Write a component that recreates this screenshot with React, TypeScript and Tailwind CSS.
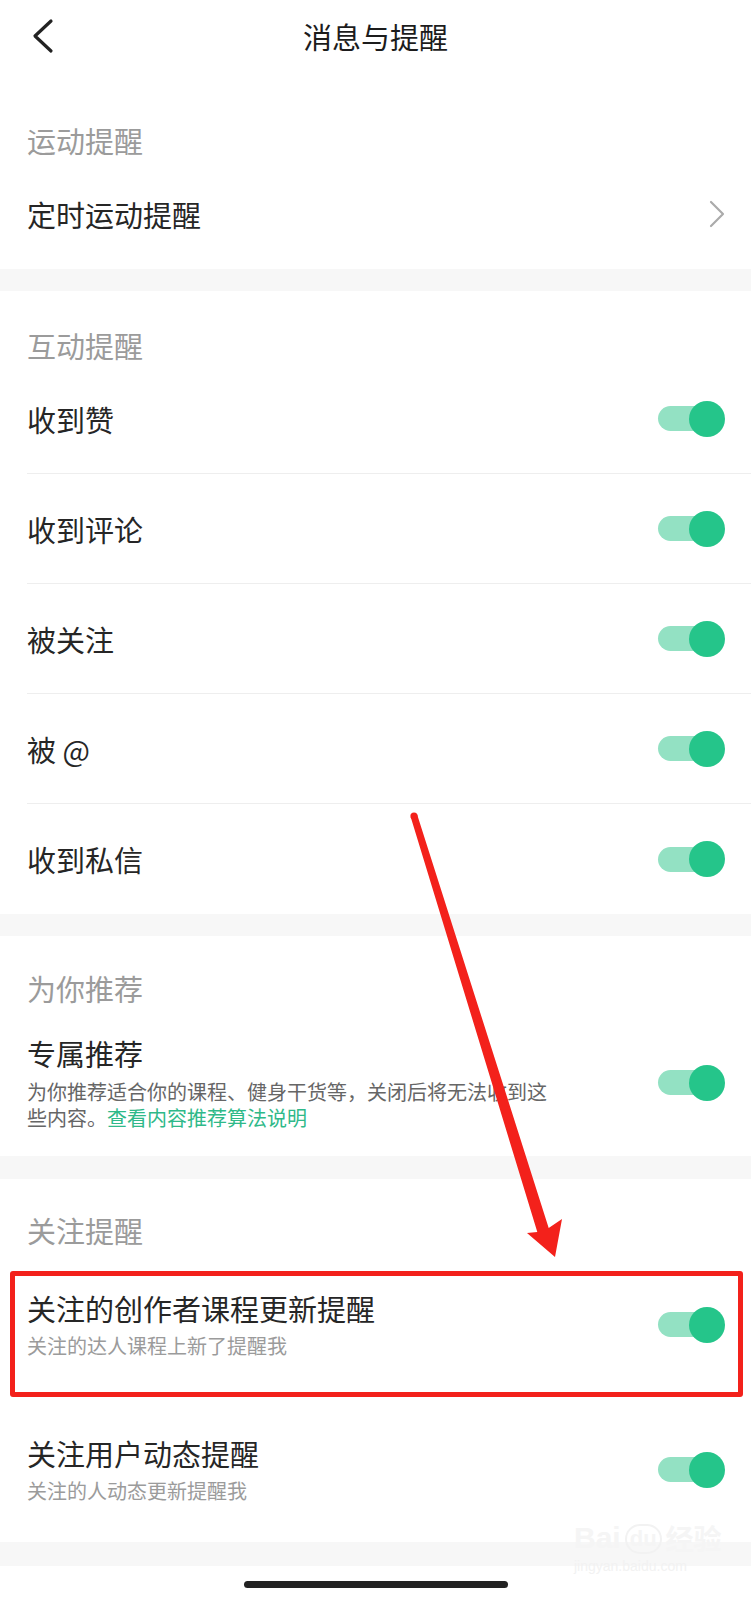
import React from "react";

const FONT = '"Noto Sans CJK SC", "Noto Sans", sans-serif';

function Toggle() {
  return (
    <div className="flex items-center">
      <div className="w-[50px] h-[25px] rounded-full bg-[#93e1c3]" />
      <div className="w-[36px] h-[36px] rounded-full bg-[#25c58a] -ml-[19px]" />
    </div>
  );
}

function Band({ h }: { h: string }) {
  return <div className={`bg-[#f7f7f7] ${h}`} />;
}

function Label({ text, pt }: { text: string; pt: string }) {
  return (
    <div className={`h-[73px] pl-[27px] ${pt}`}>
      <div className="text-[29px] leading-[28px] text-[#9b9b9b]">{text}</div>
    </div>
  );
}

function ToggleRow({ text, border }: { text: string; border?: boolean }) {
  return (
    <div className="pl-[27px]">
      <div
        className={`h-[110px] flex items-center justify-between pr-[26px] ${
          border ? "border-b border-[#eeeeee]" : ""
        }`}
      >
        <span className="text-[29px] leading-[36px] text-[#262626]">{text}</span>
        <Toggle />
      </div>
    </div>
  );
}

function SubRow({ title, sub, h }: { title: string; sub: string; h: string }) {
  return (
    <div className={`${h} pl-[27px] pr-[26px] flex items-center justify-between`}>
      <div className="flex flex-col">
        <span className="text-[29px] leading-[36px] text-[#262626]">{title}</span>
        <span className="mt-[7px] text-[20px] leading-[26px] text-[#9b9b9b]">{sub}</span>
      </div>
      <Toggle />
    </div>
  );
}

export default function App() {
  return (
    <div className="relative w-full h-[1600px] bg-white overflow-hidden" style={{ fontFamily: FONT }}>
      {/* Header */}
      <div className="h-[86px]">
        <div className="h-[72px] grid grid-cols-[1fr_auto_1fr] items-center">
          <div className="pl-[30px] flex items-center">
            <svg width="26" height="36" viewBox="0 0 26 36">
              <polyline
                points="21,3 5,18 21,33"
                fill="none"
                stroke="#222"
                strokeWidth="3.2"
                strokeLinecap="round"
                strokeLinejoin="round"
              />
            </svg>
          </div>
          <div className="text-[29px] leading-[36px] text-[#1c1c1c]">消息与提醒</div>
          <div />
        </div>
      </div>

      {/* 运动提醒 */}
      <Label text="运动提醒" pt="pt-[40px]" />
      <div className="h-[110px] pl-[27px] pr-[26px] flex items-center justify-between">
        <span className="text-[29px] leading-[36px] text-[#262626]">定时运动提醒</span>
        <svg width="16" height="28" viewBox="0 0 16 28">
          <polyline
            points="2,2 14,14 2,26"
            fill="none"
            stroke="#ababab"
            strokeWidth="2.2"
            strokeLinecap="round"
            strokeLinejoin="round"
          />
        </svg>
      </div>
      <Band h="h-[22px]" />

      {/* 互动提醒 */}
      <Label text="互动提醒" pt="pt-[40px]" />
      <ToggleRow text="收到赞" border />
      <ToggleRow text="收到评论" border />
      <ToggleRow text="被关注" border />
      <ToggleRow text="被 @" border />
      <ToggleRow text="收到私信" />
      <Band h="h-[22px]" />

      {/* 为你推荐 */}
      <Label text="为你推荐" pt="pt-[38px]" />
      <div className="h-[147px] pl-[27px] pr-[26px] flex items-center justify-between">
        <div className="flex flex-col w-[527px]">
          <span className="text-[29px] leading-[36px] text-[#262626]">专属推荐</span>
          <div className="mt-[8px] text-[20px] leading-[26px] text-[#666666] whitespace-nowrap">
            为你推荐适合你的课程、健身干货等，关闭后将无法收到这
          </div>
          <div className="flex text-[20px] leading-[26px] whitespace-nowrap">
            <span className="text-[#666666]">些内容。</span>
            <span className="text-[#2fb989]">查看内容推荐算法说明</span>
          </div>
        </div>
        <Toggle />
      </div>
      <Band h="h-[23px]" />

      {/* 关注提醒 */}
      <Label text="关注提醒" pt="pt-[37px]" />
      <SubRow h="h-[145px]" title="关注的创作者课程更新提醒" sub="关注的达人课程上新了提醒我" />
      <SubRow h="h-[145px]" title="关注用户动态提醒" sub="关注的人动态更新提醒我" />
      <Band h="h-[24px]" />

      {/* Home indicator */}
      <div className="flex justify-center pt-[15px]">
        <div className="w-[264px] h-[7px] rounded-full bg-[#222222]" />
      </div>

      {/* Red highlight box */}
      <div className="absolute left-[10px] top-[1271px] w-[733px] h-[126px] border-[5px] border-[#f3211b] rounded-[3px]" />

      {/* Red arrow */}
      <svg className="absolute left-0 top-0 pointer-events-none" width="751" height="1600" viewBox="0 0 751 1600">
        <polygon
          points="410.7,817 417.3,815 548.7,1228 562,1219 555,1257 527,1233 537.3,1232"
          fill="#f3211b"
        />
        <circle cx="414" cy="816" r="3.6" fill="#f3211b" />
      </svg>

      {/* Watermark */}
      <div className="absolute left-[574px] top-[1522px] flex flex-col items-start pointer-events-none">
        <div className="flex items-end gap-[4px]">
          <span
            className="text-[30px] leading-[32px] font-bold text-[#f5f5f5]"
            style={{ fontFamily: '"Liberation Sans", sans-serif' }}
          >
            Bai
          </span>
          <span
            className="text-[22px] leading-[26px] font-bold text-[#f5f5f5] border-2 border-[#f2f2f2] rounded-full px-[3px]"
            style={{ fontFamily: '"Liberation Sans", sans-serif' }}
          >
            du
          </span>
          <span className="text-[28px] leading-[32px] font-bold text-[#f5f5f5]">经验</span>
        </div>
        <span
          className="mt-[4px] text-[14px] leading-[16px] text-[#f2f2f2]"
          style={{ fontFamily: '"Liberation Sans", sans-serif' }}
        >
          jingyan.baidu.com
        </span>
      </div>
    </div>
  );
}
